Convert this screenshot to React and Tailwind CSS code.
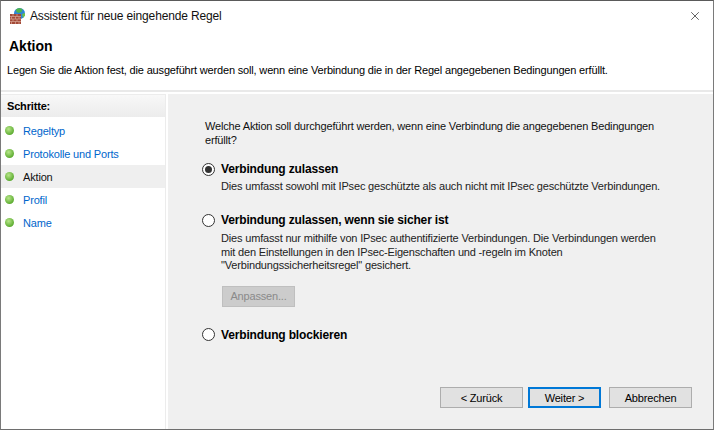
import React from 'react';
import { X } from 'lucide-react';

const steps = [
  { label: 'Regeltyp' },
  { label: 'Protokolle und Ports' },
  { label: 'Aktion', active: true },
  { label: 'Profil' },
  { label: 'Name' },
];

function WallIcon() {
  return (
    <svg width="17" height="16" viewBox="0 0 17 16">
      <circle cx="10.500" cy="5.500" r="5.500" fill="#2f86d6" />
      <path d="M7 1.500c2-2 5-1.500 6.500-.5l-1 3-3 1-2-1z" fill="#4fb54a" />
      <path d="M13 6l3-1v2.500l-2 2.500z" fill="#6cc04a" />
      <rect x="1" y="6" width="11" height="10" fill="#a34a38" />
      <path d="M1 8.500h11M1 11h11M1 13.500h11M4 6v2.500M8 6v2.500M2.500 8.500V11M6.500 8.500V11M10 8.500V11M4 11v2.500M8 11v2.500M2.500 13.500V16M6.500 13.500V16M10 13.500V16" stroke="#d9a695" strokeWidth="0.7" fill="none" />
    </svg>
  );
}

function Radio({ checked }) {
  return (
    <span className="flex h-[13px] w-[13px] shrink-0 items-center justify-center rounded-full border border-[#333333] bg-white">
      {checked && <span className="h-[7px] w-[7px] rounded-full bg-[#333333]" />}
    </span>
  );
}

function Option({ title, checked, className, children }) {
  return (
    <div className={className}>
      <div className="flex h-[16px] items-center gap-[6px]">
        <Radio checked={checked} />
        <span className="text-[12px] font-bold tracking-[-0.15px] text-black">{title}</span>
      </div>
      {children}
    </div>
  );
}

function WizardButton({ children, primary, className }) {
  return (
    <div
      className={
        'flex h-[21px] items-center justify-center bg-[#e1e1e1] ' +
        (primary ? 'border-2 border-[#0078d7] ' : 'border border-[#adadad] ') +
        (className || '')
      }
    >
      {children}
    </div>
  );
}

export default function App() {
  return (
    <div className="flex h-[430px] w-[714px] flex-col overflow-hidden border border-t-[#5a5a5a] border-r-[#7a7a7a] border-b-[#6e6e6e] border-l-[#7a7a7a] bg-white font-['Liberation_Sans',sans-serif] text-[11px] leading-[14px] tracking-[-0.17px] text-black">
      {/* title bar */}
      <div className="flex h-[30px] shrink-0 items-center pl-[8px]">
        <WallIcon />
        <span className="ml-[4px] text-[12px] tracking-[-0.15px] text-[#111111]">Assistent für neue eingehende Regel</span>
        <X className="ml-auto mr-[11px] text-[#222222]" size={14} strokeWidth={1.2} />
      </div>

      {/* header */}
      <div className="flex h-[61px] shrink-0 flex-col border-b-2 border-[#e9e9e9]">
        <div className="mt-[8px] ml-[8px] text-[14px] font-bold tracking-normal">Aktion</div>
        <div className="mt-[10px] ml-[6px]">Legen Sie die Aktion fest, die ausgeführt werden soll, wenn eine Verbindung die in der Regel angegebenen Bedingungen erfüllt.</div>
      </div>

      <div className="flex min-h-0 flex-1 pt-[2px]">
        {/* sidebar */}
        <div className="w-[167px] shrink-0 pr-[2px]">
          <div className="h-full border-r border-t border-[#ececec]">
            <div className="flex h-[22px] items-center bg-gradient-to-b from-[#f8f8f8] to-[#ececec] pl-[6px] font-bold">Schritte:</div>
            <div className="mt-[2px] flex flex-col">
              {steps.map((s) => (
                <div key={s.label} className={'flex h-[23px] items-center pl-[4px] ' + (s.active ? 'bg-[#efefef]' : '')}>
                  <span className="h-[9px] w-[9px] rounded-full bg-[radial-gradient(circle_at_40%_35%,#b8e68a,#58a92c_75%)]" />
                  <span className={'ml-[9px] ' + (s.active ? 'text-[#111111]' : 'text-[#0066cc]')}>{s.label}</span>
                </div>
              ))}
            </div>
          </div>
        </div>

        {/* content */}
        <div className="flex flex-1 flex-col bg-[#f0f0f0] pt-[25px] pl-[37px]">
          <p className="w-[470px] text-[#111111]">Welche Aktion soll durchgeführt werden, wenn eine Verbindung die angegebenen Bedingungen erfüllt?</p>

          <Option className="mt-[14px] -ml-[3px]" title="Verbindung zulassen" checked>
            <p className="mt-[2px] ml-[19px] text-[#222222]">Dies umfasst sowohl mit IPsec geschützte als auch nicht mit IPsec geschützte Verbindungen.</p>
          </Option>

          <Option className="mt-[19px] -ml-[3px]" title="Verbindung zulassen, wenn sie sicher ist">
            <p className="mt-[4px] ml-[19px] w-[442px] leading-[13.500px] text-[#222222]">Dies umfasst nur mithilfe von IPsec authentifizierte Verbindungen. Die Verbindungen werden mit den Einstellungen in den IPsec-Eigenschaften und -regeln im Knoten "Verbindungssicherheitsregel" gesichert.</p>
            <div className="mt-[13px] ml-[20px] flex h-[21px] w-[73px] items-center justify-center border border-[#bfbfbf] bg-[#cccccc] text-[#8a8a8a]">Anpassen...</div>
          </Option>

          <Option className="mt-[20px] -ml-[3px]" title="Verbindung blockieren" />

          <div className="mt-auto mb-[21px] flex pl-[235px]">
            <WizardButton className="w-[83px]">&lt; Zurück</WizardButton>
            <WizardButton primary className="ml-[5px] w-[73px]">Weiter &gt;</WizardButton>
            <WizardButton className="ml-[8px] w-[83px]">Abbrechen</WizardButton>
          </div>
        </div>
      </div>
    </div>
  );
}
